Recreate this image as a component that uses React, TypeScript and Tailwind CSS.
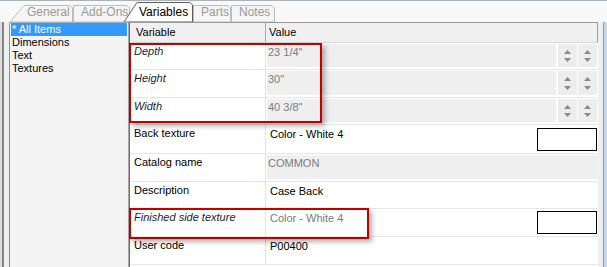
import React from 'react';

type Row = {
  name: string;
  value: string;
  italic?: boolean;
  readOnly?: boolean;
  spin?: boolean;
  swatch?: boolean;
  dim?: boolean;
  h: string;
};

const rows: Row[] = [
  { name: 'Depth', value: '23 1/4"', italic: true, readOnly: true, spin: true, h: 'h-[27px]' },
  { name: 'Height', value: '30"', italic: true, readOnly: true, spin: true, h: 'h-[28px]' },
  { name: 'Width', value: '40 3/8"', italic: true, readOnly: true, spin: true, h: 'h-[27px]' },
  { name: 'Back texture', value: 'Color - White 4', swatch: true, h: 'h-[29px]' },
  { name: 'Catalog name', value: 'COMMON', readOnly: true, h: 'h-[28px]' },
  { name: 'Description', value: 'Case Back', h: 'h-[27px]' },
  { name: 'Finished side texture', value: 'Color - White 4', italic: true, dim: true, swatch: true, h: 'h-[28px]' },
  { name: 'User code', value: 'P00400', h: 'h-[28px]' },
];

const listItems = ['* All Items', 'Dimensions', 'Text', 'Textures'];

function SpinBox() {
  return (
    <div className="w-[19px] shrink-0 mt-[1px] mb-[2px] bg-[#ededed] flex flex-col items-center justify-between pt-[6px] pb-[5px]">
      <svg width="7" height="4" viewBox="0 0 7 4">
        <polygon points="0,4 3.5,0 7,4" fill="#8a8a8a" />
      </svg>
      <svg width="7" height="4" viewBox="0 0 7 4">
        <polygon points="0,0 7,0 3.5,4" fill="#8a8a8a" />
      </svg>
    </div>
  );
}

function Tab({ label, w, h, shape, selected, pl, className }: { label: string; w: string; h: string; shape: string; selected?: boolean; pl: string; className?: string }) {
  return (
    <div className={`relative ${w} ${h} ${className ?? ''}`}>
      <svg className="absolute inset-0 w-full h-full" preserveAspectRatio="none">
        <polygon
          points={shape}
          fill={selected ? '#fdfdfd' : '#f5f5f5'}
          stroke={selected ? '#5f5f5f' : '#bcbcbc'}
          strokeWidth="1"
        />
      </svg>
      <span className={`relative block ${pl} ${selected ? 'pt-[3px] text-black' : 'pt-0 text-[#9a9a9a]'} text-[12px] leading-[15px] whitespace-nowrap`}>
        {label}
      </span>
    </div>
  );
}

export default function App() {
  return (
    <div className="w-[607px] h-[267px] relative overflow-hidden bg-[#f0f0f0] flex flex-col font-['Liberation_Sans',Arial,sans-serif] border-t border-[#aab2bb]">
      {/* tab strip */}
      <div className="h-[21px] flex items-end bg-[#f9f9f9] pl-[10px]">
        <Tab label="General" w="w-[63px]" h="h-[17px]" pl="pl-[17px]" shape="0,17 14,0.5 60,0.5 62.5,3 62.5,17" className="overflow-hidden" />
        <Tab label="Add-Ons" w="w-[57px]" h="h-[17px]" pl="pl-[8px]" shape="0.5,17 0.5,0.5 54,0.5 56.5,3 56.5,17" className="overflow-hidden" />
        <Tab label="Variables" w="w-[71px]" h="h-[20px]" pl="pl-[17px]" selected shape="2,20 15,0.5 68,0.5 70.5,3 70.5,20" className="-ml-[8px] z-10" />
        <Tab label="Parts" w="w-[38px]" h="h-[17px]" pl="pl-[8px]" shape="0.5,17 0.5,0.5 35,0.5 37.5,3 37.5,17" />
        <Tab label="Notes" w="w-[44px]" h="h-[17px]" pl="pl-[8px]" shape="0.5,17 0.5,0.5 41,0.5 43.5,3 43.5,17" />
      </div>

      {/* body */}
      <div className="flex flex-1">
        {/* left gutter */}
        <div className="w-[9px] flex">
          <div className="w-[2px] bg-[#dcdcdc]" />
          <div className="w-[2px] bg-[#858585]" />
          <div className="flex-1 bg-[#f0f0f0]" />
        </div>

        {/* list */}
        <div className="w-[120px] border-l border-[#8c8c8c] border-t border-t-[#b0b0b0] border-r border-r-[#a8a8a8] bg-[#f4f4f4] text-[11px] leading-[13px]">
          {listItems.map((item, i) => (
            <div key={item} className={`mx-[1px] pl-[1px] ${i === 0 ? 'bg-[#3399ff] text-white' : 'text-black'}`}>
              {item}
            </div>
          ))}
        </div>

        {/* grid */}
        <div className="w-[469px] border-l border-[#6e6e6e] border-t border-t-[#9a9a9a] bg-white flex flex-col text-[11px] leading-[13px]">
          <div className="h-[20px] flex bg-[#f0f0f0] border-b border-[#d6d6d6] border-r border-r-[#a0a0a0]">
            <div className="w-[136px] border-r border-[#a8a8a8] pl-[6px] pt-[3px] text-black">Variable</div>
            <div className="flex-1 pl-[3px] pt-[3px] text-black">Value</div>
          </div>
          {rows.map((r) => (
            <div key={r.name} className={`${r.h} flex border-b border-[#e6e6e6]`}>
              <div className={`w-[136px] shrink-0 border-r border-[#e2e2e2] pl-[4px] pt-[2px] ${r.italic ? 'italic text-[#1c1c30]' : 'text-black'}`}>
                {r.name}
              </div>
              <div className="flex-1 flex">
                <div
                  className={`flex-1 ml-[1px] mt-[1px] mb-[2px] pt-[2px] ${r.readOnly ? 'bg-[#efefef] text-[#7c7c7c] pl-[1px]' : 'pl-[3px]'} ${r.dim ? 'text-[#7a7a7a]' : ''} ${!r.readOnly && !r.dim ? 'text-black' : ''}`}
                >
                  {r.value}
                </div>
                {r.spin && (
                  <>
                    <div className="w-[2px] shrink-0" />
                    <SpinBox />
                    <div className="w-[1px] shrink-0" />
                    <SpinBox />
                    <div className="w-[1px] shrink-0" />
                  </>
                )}
                {r.swatch && (
                  <div className="w-[60px] h-[23px] shrink-0 self-center border border-black bg-white mr-[1px]" />
                )}
              </div>
            </div>
          ))}
        </div>

        {/* right edge */}
        <div className="flex-1 flex">
          <div className="w-[5px] bg-[#f0f0f0]" />
          <div className="w-[1px] bg-[#8a9bb0]" />
          <div className="flex-1 bg-[#c6d6e9]" />
        </div>
      </div>

      {/* highlight boxes */}
      <div className="absolute left-[129px] top-[42px] w-[193px] h-[80px] border-2 border-[#c00000] shadow-[3px_3px_5px_rgba(0,0,0,0.3)] pointer-events-none" />
      <div className="absolute left-[129px] top-[207px] w-[240px] h-[31px] border-2 border-[#c00000] shadow-[3px_3px_5px_rgba(0,0,0,0.3)] pointer-events-none" />
    </div>
  );
}
